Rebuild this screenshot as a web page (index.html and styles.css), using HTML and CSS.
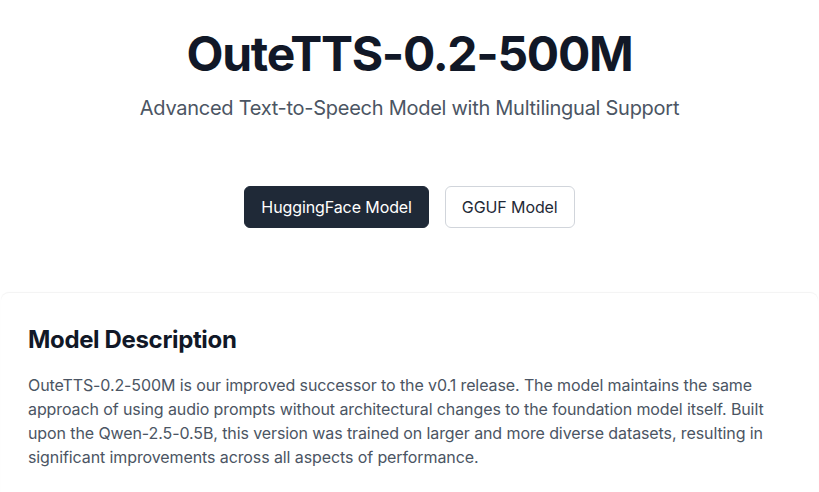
FILE: index.html
```html
<!DOCTYPE html>
<html lang="en">
<head>
<meta charset="utf-8">
<title>OuteTTS-0.2-500M</title>
<link rel="stylesheet" href="styles.css">
</head>
<body>
<header class="hero">
  <h1 class="title">OuteTTS-0.2-500M</h1>
  <p class="subtitle">Advanced Text-to-Speech Model with Multilingual Support</p>
  <div class="actions">
    <a class="btn btn-dark" href="#">HuggingFace Model</a>
    <a class="btn btn-light" href="#">GGUF Model</a>
  </div>
</header>
<section class="card">
  <h2 class="card-title">Model Description</h2>
  <p class="card-text">OuteTTS-0.2-500M is our improved successor to the v0.1 release. The model maintains the same approach of using audio prompts without architectural changes to the foundation model itself. Built upon the Qwen-2.5-0.5B, this version was trained on larger and more diverse datasets, resulting in significant improvements across all aspects of performance.</p>
</section>
</body>
</html>
```

FILE: styles.css
```css
* { box-sizing: border-box; }
html, body {
  margin: 0;
  padding: 0;
  background: #ffffff;
  font-family: Inter, "Noto Sans", "Liberation Sans", sans-serif;
  color: #111827;
  overflow: hidden;
}
.hero {
  display: flex;
  flex-direction: column;
  align-items: center;
  padding-top: 30px;
  padding-bottom: 65px;
}
.title {
  margin: 0;
  font-size: 48px;
  line-height: 48px;
  font-weight: 700;
  color: #111827;
  letter-spacing: -1.3px;
}
.subtitle {
  margin: 16px 0 0;
  font-size: 20px;
  line-height: 28px;
  color: #4b5563;
  letter-spacing: -0.27px;
}
.actions {
  display: flex;
  gap: 16px;
  margin-top: 64px;
}
.btn {
  display: inline-block;
  padding: 8px 16px;
  font-size: 16px;
  line-height: 24px;
  border-radius: 6px;
  text-decoration: none;
  border: 1px solid transparent;
  letter-spacing: -0.1px;
}
.btn-dark {
  background: #1f2937;
  color: #ffffff;
  border-color: #1f2937;
}
.btn-light {
  background: #ffffff;
  color: #1f2937;
  border-color: #d1d5db;
}
.card {
  margin: 0 1px;
  background: #ffffff;
  border-radius: 8px;
  box-shadow: 0 -1px 1px rgba(0, 0, 0, 0.05);
  padding: 31px 28px 32px 27px;
}
.card-title {
  margin: 0 0 17px;
  font-size: 24px;
  line-height: 32px;
  font-weight: 700;
  color: #111827;
  letter-spacing: -0.35px;
}
.card-text {
  margin: 0;
  font-size: 16px;
  line-height: 24px;
  color: #4b5563;
  letter-spacing: -0.1px;
}
```
